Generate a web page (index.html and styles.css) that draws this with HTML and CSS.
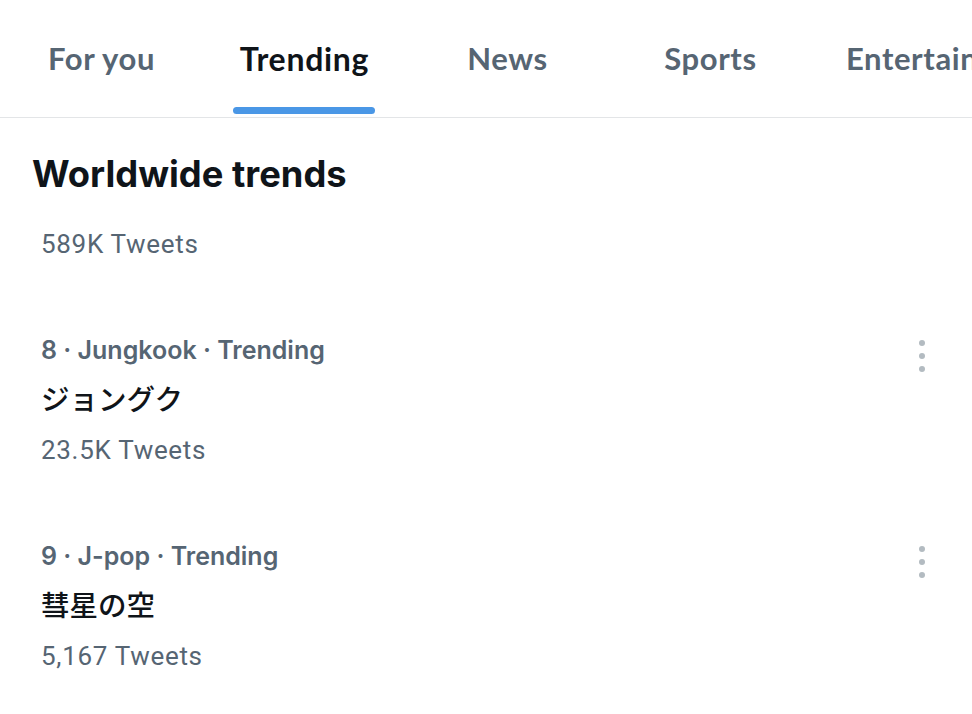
FILE: index.html
```html
<!DOCTYPE html>
<html>
<head>
<meta charset="utf-8">
<link rel="stylesheet" href="styles.css">
</head>
<body>
<div class="page">
  <nav class="tabs">
    <div class="tab"><span class="tab-label">For you</span></div>
    <div class="tab active"><span class="tab-label">Trending</span></div>
    <div class="tab"><span class="tab-label">News</span></div>
    <div class="tab"><span class="tab-label">Sports</span></div>
    <div class="tab tab-last"><span class="tab-label">Entertainment</span></div>
  </nav>
  <main class="content">
    <h2 class="section-title">Worldwide trends</h2>
    <div class="trend trend-partial">
      <div class="trend-text">
        <div class="count">589K Tweets</div>
      </div>
    </div>
    <div class="trend">
      <div class="trend-text">
        <div class="meta">8 · Jungkook · Trending</div>
        <div class="title">ジョングク</div>
        <div class="count">23.5K Tweets</div>
      </div>
      <div class="more"><span></span><span></span><span></span></div>
    </div>
    <div class="trend">
      <div class="trend-text">
        <div class="meta">9 · J-pop · Trending</div>
        <div class="title">彗星の空</div>
        <div class="count">5,167 Tweets</div>
      </div>
      <div class="more"><span></span><span></span><span></span></div>
    </div>
  </main>
</div>
</body>
</html>
```
FILE: styles.css
```css
* { box-sizing: border-box; }
html, body { margin: 0; padding: 0; background: #fff; }
.page {
  width: 972px;
  height: 714px;
  overflow: hidden;
  font-family: "Inter", "Noto Sans CJK JP", sans-serif;
}
.tabs {
  display: flex;
  height: 118px;
  border-bottom: 1px solid #e3e5e7;
  overflow: hidden;
}
.tab {
  flex: 0 0 203px;
  display: flex;
  justify-content: center;
  align-items: flex-start;
  padding-top: 39px;
  font-family: "Lato", sans-serif;
  font-weight: 700;
  font-size: 31px;
  color: #566573;
  white-space: nowrap;
}
.tab-last {
  flex: 0 0 auto;
  justify-content: flex-start;
  padding-left: 34px;
}
.tab-label {
  position: relative;
  display: inline-block;
  height: 77px;
  letter-spacing: 0.6px;
}
.tab.active { color: #0f1419; }
.tab.active .tab-label {
  font-size: 32px;
  letter-spacing: 0.7px;
  height: 76px;
}
.tab.active .tab-label::after {
  content: "";
  position: absolute;
  left: -7px;
  right: -6px;
  bottom: 1px;
  height: 7px;
  border-radius: 4px;
  background: #4a97e6;
}
.content {
  padding: 0 0 0 32px;
}
.section-title {
  margin: 0;
  padding-top: 35px;
  font-size: 36.3px;
  line-height: 42px;
  font-weight: 700;
  color: #0f1419;
  letter-spacing: 0;
}
.trend {
  display: flex;
  justify-content: space-between;
  padding-left: 9px;
  padding-right: 47px;
  height: 206px;
}
.trend-partial { margin-top: 24px; height: 106px; }
.trend-text { display: flex; flex-direction: column; }
.meta {
  height: 50px;
  line-height: 50px;
  font-size: 25px;
  font-weight: 600;
  color: #566573;
}
.title {
  height: 50px;
  line-height: 50px;
  font-size: 28.5px;
  font-weight: 500;
  color: #0f1419;
}
.count {
  height: 50px;
  line-height: 50px;
  font-size: 26px;
  font-weight: 400;
  letter-spacing: 0.7px;
  color: #566573;
  font-family: "Roboto", "Inter", sans-serif;
}
.more {
  display: flex;
  flex-direction: column;
  gap: 7px;
  padding-top: 15px;
}
.more span {
  display: block;
  width: 6px;
  height: 6px;
  border-radius: 50%;
  background: #b3bbc1;
}
```
